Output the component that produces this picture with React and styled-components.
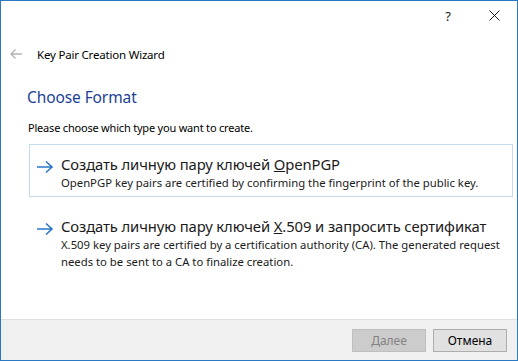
import React from "react";
import styled, { createGlobalStyle } from "styled-components";

const GlobalStyle = createGlobalStyle`
  html, body {
    margin: 0;
    padding: 0;
    background: #ffffff;
  }
  body {
    font-family: "Segoe UI", "Noto Sans", "Open Sans", sans-serif;
  }
`;

const Window = styled.div`
  box-sizing: border-box;
  width: 518px;
  height: 361px;
  border: 1px solid #2b79c2;
  background: #ffffff;
  display: flex;
  flex-direction: column;
`;

const TitleBar = styled.div`
  height: 29px;
  display: flex;
  justify-content: flex-end;
  align-items: center;
`;

const CaptionButton = styled.div`
  width: 46px;
  height: 29px;
  display: flex;
  align-items: center;
  justify-content: center;
  color: #1a1a1a;
  font-size: 13px;
`;

const Header = styled.div`
  display: flex;
  align-items: center;
  height: 26px;
  margin-top: 11px;
`;

const BackButton = styled.div`
  box-sizing: border-box;
  width: 36px;
  padding-left: 8px;
  display: flex;
  align-items: center;
`;

const WizardTitle = styled.div`
  font-size: 11.5px;
  letter-spacing: -0.2px;
  color: #000000;
`;

const Body = styled.div`
  flex: 1;
  padding: 0 4px 0 26px;
`;

const PageTitle = styled.div`
  margin-top: 19px;
  font-size: 15.5px;
  letter-spacing: -0.1px;
  color: #1c3f95;
  height: 22px;
  line-height: 22px;
`;

const Prompt = styled.div`
  margin-top: 12px;
  padding-left: 1px;
  font-size: 11px;
  letter-spacing: -0.2px;
  line-height: 16px;
  color: #000000;
`;

const Choices = styled.div`
  margin-top: 8px;
  margin-left: 2px;
  display: flex;
  flex-direction: column;
  gap: 9px;
`;

const Choice = styled.div`
  box-sizing: border-box;
  width: 484px;
  padding: 9px 2px 5px 6px;
  border: 1px solid ${(p) => (p.$focused ? "#c6dbee" : "transparent")};
  display: flex;
  align-items: flex-start;
`;

const ArrowWrap = styled.div`
  width: 25px;
  padding-top: 3px;
  flex-shrink: 0;
`;

const ChoiceText = styled.div`
  display: flex;
  flex-direction: column;
`;

const ChoiceTitle = styled.div`
  font-size: 14.8px;
  letter-spacing: -0.1px;
  color: #1b1b1b;
  line-height: 20px;
`;

const ChoiceNote = styled.div`
  font-size: 11.3px;
  letter-spacing: 0;
  color: #1b1b1b;
  line-height: 17px;
`;

const Footer = styled.div`
  height: 40px;
  border-top: 1px solid #dfdfdf;
  background: #f0f0f0;
  display: flex;
  justify-content: flex-end;
  align-items: center;
  gap: 7px;
  padding-right: 10px;
`;

const Button = styled.div`
  box-sizing: border-box;
  width: 74px;
  height: 23px;
  display: flex;
  align-items: center;
  justify-content: center;
  font-size: 12px;
  border: 1px solid ${(p) => (p.$disabled ? "#bfbfbf" : "#adadad")};
  background: ${(p) => (p.$disabled ? "#cccccc" : "#e1e1e1")};
  color: ${(p) => (p.$disabled ? "#838383" : "#000000")};
`;

const Arrow = ({ color = "#2a77c9" }) => (
  <svg width="18" height="14" viewBox="0 0 18 14">
    <path d="M1 7 H16 M10 1.5 L16 7 L10 12.5" fill="none" stroke={color} strokeWidth="1.6" />
  </svg>
);

const BackArrow = () => (
  <svg width="14" height="12" viewBox="0 0 14 12">
    <path d="M13 6 H2 M6.5 1.5 L2 6 L6.5 10.5" fill="none" stroke="#b4b4b4" strokeWidth="1.4" />
  </svg>
);

const CloseIcon = () => (
  <svg width="11" height="11" viewBox="0 0 11 11">
    <path d="M0.5 0.5 L10.5 10.5 M10.5 0.5 L0.5 10.5" stroke="#1a1a1a" strokeWidth="1" />
  </svg>
);

const App = () => {
  return (
    <>
      <GlobalStyle />
      <Window>
        <TitleBar>
          <CaptionButton>?</CaptionButton>
          <CaptionButton>
            <CloseIcon />
          </CaptionButton>
        </TitleBar>
        <Header>
          <BackButton>
            <BackArrow />
          </BackButton>
          <WizardTitle>Key Pair Creation Wizard</WizardTitle>
        </Header>
        <Body>
          <PageTitle>Choose Format</PageTitle>
          <Prompt>Please choose which type you want to create.</Prompt>
          <Choices>
            <Choice $focused>
              <ArrowWrap>
                <Arrow />
              </ArrowWrap>
              <ChoiceText>
                <ChoiceTitle>
                  Создать личную пару ключей <u>O</u>penPGP
                </ChoiceTitle>
                <ChoiceNote>
                  OpenPGP key pairs are certified by confirming the fingerprint of the public key.
                </ChoiceNote>
              </ChoiceText>
            </Choice>
            <Choice>
              <ArrowWrap>
                <Arrow />
              </ArrowWrap>
              <ChoiceText>
                <ChoiceTitle>
                  Создать личную пару ключей <u>X</u>.509 и запросить сертификат
                </ChoiceTitle>
                <ChoiceNote>
                  X.509 key pairs are certified by a certification authority (CA). The generated request
                  needs to be sent to a CA to finalize creation.
                </ChoiceNote>
              </ChoiceText>
            </Choice>
          </Choices>
        </Body>
        <Footer>
          <Button $disabled>
            <span>
              <u>Д</u>алее
            </span>
          </Button>
          <Button>Отмена</Button>
        </Footer>
      </Window>
    </>
  );
};

export default App;
